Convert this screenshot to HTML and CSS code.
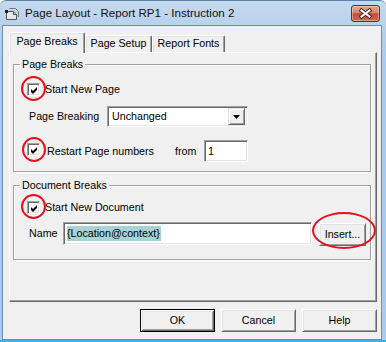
FILE: index.html
```html
<!DOCTYPE html>
<html>
<head>
<meta charset="utf-8">
<title>Page Layout</title>
<link rel="stylesheet" href="styles.css">
</head>
<body>
<div class="window">
  <div class="titlebar">
    <svg class="app-icon" width="14" height="12" viewBox="0 0 14 12">
      <path d="M1.5 3.5 H8.5 L11.5 6.5 V11.5 H1.5 Z" fill="#e8e8e8" stroke="#555"/>
      <path d="M4.5 0.5 H10.5 L13.5 3.5 V9" fill="none" stroke="#777"/>
      <rect x="0" y="2" width="3" height="3" fill="#222"/>
      <path d="M8.5 3.5 V6.5 H11.5" fill="#bbb" stroke="#555"/>
    </svg>
    <span class="title">Page Layout - Report RP1 - Instruction 2</span>
    <div class="close">
      <svg width="27" height="15" viewBox="0 0 27 15">
        <path d="M9.5 4.5 L17.5 10.5 M17.5 4.5 L9.5 10.5" stroke="#4a2520" stroke-width="4" stroke-linecap="square"/>
        <path d="M9.5 4.5 L17.5 10.5 M17.5 4.5 L9.5 10.5" stroke="#fff" stroke-width="2" stroke-linecap="square"/>
      </svg>
    </div>
  </div>
  <div class="client">
    <div class="tabs">
      <div class="tab active">Page Breaks</div>
      <div class="tab t2">Page Setup</div>
      <div class="tab t3">Report Fonts</div>
    </div>
    <div class="panel">
      <div class="group g1">
        <div class="legend">Page Breaks</div>
        <div class="row r1">
          <span class="cb"><svg width="9" height="9" viewBox="0 0 9 9"><polygon points="1,3 3,5 7,1 7,4 3,8 1,6" fill="#000"/></svg><span class="ring"></span></span>
          <span class="cb-label">Start New Page</span>
        </div>
        <div class="row r2">
          <span class="field-label">Page Breaking</span>
          <div class="combo">
            <span class="combo-text">Unchanged</span>
            <span class="drop"><svg width="7" height="4" viewBox="0 0 7 4"><polygon points="0,0 7,0 3.5,4" fill="#000"/></svg></span>
          </div>
        </div>
        <div class="row r3">
          <span class="cb cb2"><svg width="9" height="9" viewBox="0 0 9 9"><polygon points="1,3 3,5 7,1 7,4 3,8 1,6" fill="#000"/></svg><span class="ring ring2"></span></span>
          <span class="cb-label restart">Restart Page numbers</span>
          <span class="from">from</span>
          <div class="edit num">1</div>
        </div>
      </div>
      <div class="group g2">
        <div class="legend">Document Breaks</div>
        <div class="row r4">
          <span class="cb"><svg width="9" height="9" viewBox="0 0 9 9"><polygon points="1,3 3,5 7,1 7,4 3,8 1,6" fill="#000"/></svg><span class="ring"></span></span>
          <span class="cb-label">Start New Document</span>
        </div>
        <div class="row r5">
          <span class="field-label name">Name</span>
          <div class="edit name-edit"><span class="sel">{Location@context}</span></div>
          <div class="btn insert">Insert...<span class="ellipse"></span></div>
        </div>
      </div>
    </div>
    <div class="buttons">
      <div class="btn default">OK</div>
      <div class="btn">Cancel</div>
      <div class="btn">Help</div>
    </div>
  </div>
</div>
</body>
</html>
```
FILE: styles.css
```css
* { box-sizing: border-box; }
html, body { margin: 0; padding: 0; }
body {
  width: 386px;
  height: 342px;
  overflow: hidden;
  background: #ffffff;
  font-family: "Liberation Sans", Arial, sans-serif;
  font-size: 10.7px;
  color: #000;
}
.window {
  width: 386px;
  height: 342px;
  display: flex;
  flex-direction: column;
  background: linear-gradient(to bottom, #c6daef 0, #b9d1ea 24px, #a9ccee 60px, #a9ccee 100%);
  border-top: 1px solid #5f7fa6;
  border-bottom: 2px solid #3fb0e6;
  border-radius: 6px 6px 0 0;
  padding: 0 4px 0 2px;
}
.titlebar {
  height: 24px;
  display: flex;
  align-items: flex-start;
  flex: none;
}
.app-icon { margin: 7px 0 0 3px; flex: none; }
.title {
  margin: 4px 0 0 6px;
  font-family: "Liberation Sans", Arial, sans-serif;
  font-size: 11.6px;
  line-height: 16px;
  color: #111;
  white-space: nowrap;
}
.close {
  margin: 4px 2px 0 auto;
  width: 29px;
  height: 17px;
  border: 1px solid #6c2b22;
  border-radius: 3px;
  background: linear-gradient(to bottom, #e3a697 0%, #d68672 45%, #c34d35 52%, #cc6a50 100%);
  box-shadow: inset 0 0 0 1px rgba(255,255,255,0.35);
  display: flex;
  align-items: center;
  justify-content: center;
}
.client {
  flex: none;
  height: 315px;
  background: #f0f0f0;
  border: 1px solid #6f8db3;
  padding: 6px 4px 0 6px;
  display: flex;
  flex-direction: column;
}
.tabs {
  display: flex;
  align-items: flex-start;
  height: 21px;
  margin-bottom: -1px;
}
.tab {
  height: 17px;
  margin-top: 3px;
  background: #f0f0f0;
  border-top: 1px solid #fff;
  border-left: 1px solid #fff;
  border-right: 1px solid #696969;
  box-shadow: inset -1px 0 0 #a0a0a0, inset 1px 1px 0 #e3e3e3;
  border-radius: 2px 2px 0 0;
  text-align: center;
  line-height: 15px;
  white-space: nowrap;
}
.tab.active {
  position: relative;
  z-index: 1;
  width: 76px;
  height: 21px;
  margin-top: 0;
  line-height: 17px;
}
.tab.t2 { width: 67px; }
.tab.t3 { width: 73px; }
.panel {
  width: 368px;
  height: 250px;
  flex: none;
  border-top: 1px solid #fff;
  border-left: 1px solid #fff;
  border-right: 1px solid #696969;
  border-bottom: 1px solid #696969;
  box-shadow: inset -1px -1px 0 #a0a0a0;
  padding: 11px 0 0 3px;
}
.group {
  width: 358px;
  border: 1px solid #a0a0a0;
  box-shadow: inset 1px 1px 0 #fff, 1px 1px 0 #fff;
  display: flex;
  flex-direction: column;
}
.g1 { height: 108px; }
.g2 { height: 75px; margin-top: 13px; }
.legend {
  align-self: flex-start;
  margin: -7px 0 0 6px;
  padding: 0 2px;
  line-height: 13px;
  background: #f0f0f0;
  white-space: nowrap;
}
.row {
  display: flex;
  align-items: center;
  white-space: nowrap;
}
.r1 { margin: 12px 0 0 13px; height: 13px; }
.r2 { margin: 10px 0 0 15px; height: 21px; }
.r3 { margin: 13px 0 0 13px; height: 22px; }
.r4 { margin: 9px 0 0 13px; height: 13px; }
.r5 { margin: 8px 0 0 15px; height: 24px; align-items: flex-start; }
.cb {
  position: relative;
  width: 13px;
  height: 13px;
  flex: none;
  background: #fff;
  border-top: 1px solid #a0a0a0;
  border-left: 1px solid #a0a0a0;
  border-right: 1px solid #fff;
  border-bottom: 1px solid #fff;
  box-shadow: inset 1px 1px 0 #696969, inset -1px -1px 0 #e3e3e3;
  display: flex;
  align-items: center;
  justify-content: center;
}
.cb svg { margin: 1px 0 0 1px; }
.cb2 { margin-bottom: 3px; }
.ring {
  position: absolute;
  left: -7px;
  top: -8px;
  width: 25px;
  height: 25px;
  border: 2px solid #e8101a;
  border-radius: 50%;
}
.ring2 { left: -6px; top: -7px; width: 24px; }
.cb-label { margin-left: 5px; line-height: 13px; }
.restart { margin-left: 7px; width: 128px; }
.from { width: 29px; }
.field-label { width: 78px; line-height: 13px; }
.field-label.name { width: 34px; margin-top: 5px; }
.combo {
  width: 141px;
  height: 21px;
  background: #fff;
  border-top: 1px solid #a0a0a0;
  border-left: 1px solid #a0a0a0;
  border-right: 1px solid #fff;
  border-bottom: 1px solid #fff;
  box-shadow: inset 1px 1px 0 #696969, inset -1px -1px 0 #e3e3e3;
  display: flex;
  align-items: center;
  padding: 1px 2px 1px 4px;
}
.combo-text { line-height: 13px; }
.drop {
  margin-left: auto;
  width: 17px;
  height: 17px;
  background: #f0f0f0;
  border-top: 1px solid #e3e3e3;
  border-left: 1px solid #e3e3e3;
  border-right: 1px solid #696969;
  border-bottom: 1px solid #696969;
  box-shadow: inset 1px 1px 0 #fff, inset -1px -1px 0 #a0a0a0;
  display: flex;
  align-items: center;
  justify-content: center;
}
.edit {
  background: #fff;
  border-top: 1px solid #a0a0a0;
  border-left: 1px solid #a0a0a0;
  border-right: 1px solid #fff;
  border-bottom: 1px solid #fff;
  box-shadow: inset 1px 1px 0 #696969, inset -1px -1px 0 #e3e3e3;
  line-height: 13px;
  display: flex;
  align-items: center;
}
.num { width: 44px; height: 22px; padding-left: 3px; }
.name-edit { width: 249px; height: 23px; padding-left: 3px; }
.sel { background: #a7d3d5; line-height: 15px; padding-right: 1px; }
.btn {
  position: relative;
  width: 75px;
  height: 23px;
  background: #f0f0f0;
  border-top: 1px solid #fff;
  border-left: 1px solid #fff;
  border-right: 1px solid #696969;
  border-bottom: 1px solid #696969;
  box-shadow: inset 1px 1px 0 #e3e3e3, inset -1px -1px 0 #a0a0a0;
  display: flex;
  align-items: center;
  justify-content: center;
  line-height: 13px;
}
.btn.default {
  border: 1px solid #000;
  box-shadow: inset 1px 1px 0 #fff, inset -1px -1px 0 #696969, inset 2px 2px 0 #e3e3e3, inset -2px -2px 0 #a0a0a0;
}
.insert { width: 47px; margin: 1px 0 0 7px; }
.ellipse {
  position: absolute;
  left: -8px;
  top: -12px;
  width: 64px;
  height: 37px;
  border: 2px solid #e8101a;
  border-radius: 50%;
}
.buttons {
  width: 368px;
  margin-top: 7px;
  display: flex;
  justify-content: flex-end;
  gap: 6px;
}
```
